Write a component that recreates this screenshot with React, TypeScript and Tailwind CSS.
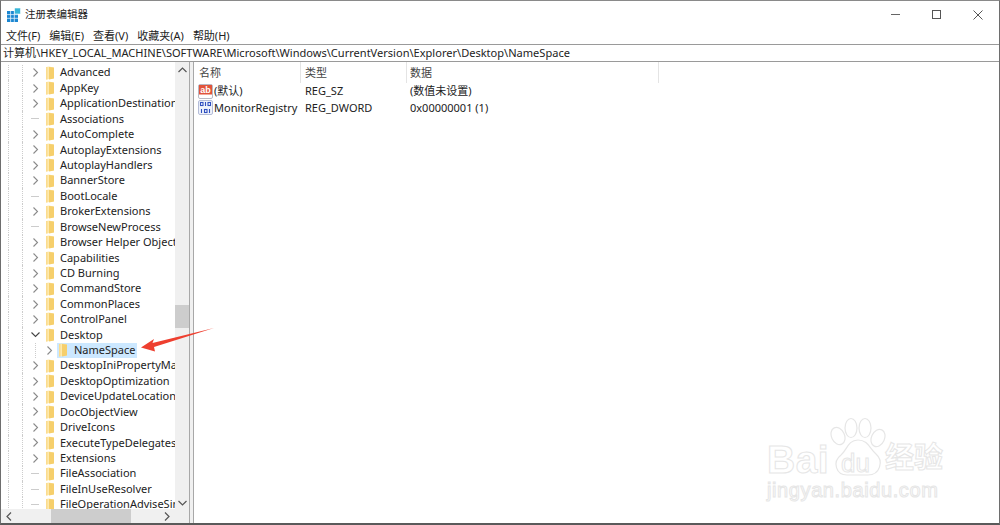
import React from "react";

const font = { fontFamily: '"Noto Sans","Noto Sans CJK SC",sans-serif' };

type Row = { name: string; kind: "c" | "l" | "o" | "s" };
const rows: Row[] = [
  { name: "Advanced", kind: "c" },
  { name: "AppKey", kind: "c" },
  { name: "ApplicationDestinations", kind: "c" },
  { name: "Associations", kind: "l" },
  { name: "AutoComplete", kind: "c" },
  { name: "AutoplayExtensions", kind: "c" },
  { name: "AutoplayHandlers", kind: "c" },
  { name: "BannerStore", kind: "c" },
  { name: "BootLocale", kind: "l" },
  { name: "BrokerExtensions", kind: "c" },
  { name: "BrowseNewProcess", kind: "l" },
  { name: "Browser Helper Objects", kind: "c" },
  { name: "Capabilities", kind: "c" },
  { name: "CD Burning", kind: "c" },
  { name: "CommandStore", kind: "c" },
  { name: "CommonPlaces", kind: "c" },
  { name: "ControlPanel", kind: "c" },
  { name: "Desktop", kind: "o" },
  { name: "NameSpace", kind: "s" },
  { name: "DesktopIniPropertyMap", kind: "c" },
  { name: "DesktopOptimization", kind: "c" },
  { name: "DeviceUpdateLocations", kind: "c" },
  { name: "DocObjectView", kind: "c" },
  { name: "DriveIcons", kind: "c" },
  { name: "ExecuteTypeDelegates", kind: "c" },
  { name: "Extensions", kind: "c" },
  { name: "FileAssociation", kind: "l" },
  { name: "FileInUseResolver", kind: "l" },
  { name: "FileOperationAdviseSinks", kind: "l" },
];

function Folder() {
  return (
    <svg width="10" height="14" viewBox="0 0 10 14" className="shrink-0">
      <path d="M1 1 L4 0.5 L8.5 1.5 V12.5 L1 13.5 Z" fill="#fde9ad" />
      <path d="M4 1 L9 1.5 V12.5 L4 13.5 Z" fill="#f6cf6c" />
      <path d="M1 1 L2.5 1 V13.5 L1 13.5 Z" fill="#fbdc8e" />
    </svg>
  );
}

function Chevron({ open }: { open?: boolean }) {
  return (
    <svg width="9" height="9" viewBox="0 0 9 9" fill="none" stroke="#8a8a8a" strokeWidth="1.1" className="shrink-0">
      {open ? <path d="M0.5 2.5 L4.5 6.5 L8.5 2.5" stroke="#444" /> : <path d="M2.5 0.5 L6.5 4.5 L2.5 8.5" />}
    </svg>
  );
}

function TreeRow({ row }: { row: Row }) {
  const sel = row.kind === "s";
  return (
    <div className="flex h-[15.43px] shrink-0 items-center whitespace-nowrap text-[11px] text-[#222]">
      <div className="h-full w-[8px] shrink-0 border-r border-dotted border-[#ccc]" />
      <div className="h-full w-[14px] shrink-0 border-r border-dotted border-[#ccc]" />
      {sel ? (
        <>
          <div className="h-full w-[13px] shrink-0 border-r border-dotted border-[#ccc]" />
          <div className="ml-[9px] flex h-[15px] w-[12px] shrink-0 items-center"><Chevron /></div>
          <div className="flex h-[15px] items-center gap-[6px] bg-[#cce8ff] pl-[1px] pr-[2px]">
            <Folder />
            <span>{row.name}</span>
          </div>
        </>
      ) : (
        <>
          <div className="ml-[8px] flex w-[14px] shrink-0 items-center">
            {row.kind === "l" ? <div className="h-px w-[8px] bg-[#ccc]" /> : <Chevron open={row.kind === "o"} />}
          </div>
          <Folder />
          <span className="ml-[5px]">{row.name}</span>
        </>
      )}
    </div>
  );
}

function AbIcon() {
  return (
    <svg width="15" height="15" viewBox="0 0 15 15" className="shrink-0">
      <rect x="0.5" y="0.5" width="14" height="14" rx="1.5" fill="#fff" stroke="#b9b9c4" />
      <rect x="1" y="1" width="13" height="9.5" fill="#e2543a" />
      <text x="7.5" y="9" textAnchor="middle" fontSize="9" fontWeight="700" fill="#fff" fontFamily="Liberation Sans">ab</text>
    </svg>
  );
}

function BinIcon() {
  return (
    <svg width="15" height="15" viewBox="0 0 15 15" className="shrink-0">
      <rect x="0.5" y="0.5" width="14" height="14" rx="1.5" fill="#eef2fb" stroke="#b4bcd8" />
      <g fill="none" stroke="#2f4fc0" strokeWidth="1.1">
        <rect x="2.5" y="2.5" width="2.5" height="3" />
        <path d="M7.5 2 V6" />
        <rect x="10" y="2.5" width="2.5" height="3" />
        <path d="M3.5 9 V13" />
        <rect x="6.5" y="9.5" width="2.5" height="3" />
        <path d="M11.5 9 V13" />
      </g>
    </svg>
  );
}

function Arrow() {
  return (
    <svg width="90" height="40" viewBox="0 0 90 40" className="absolute left-[135px] top-[322px]">
      <path d="M5 24.5 L18 16 L16.5 20 L78 5 L18 24 L19 28.5 Z" fill="#ee3f2f" />
    </svg>
  );
}

function Watermark() {
  const outline = "text-transparent [-webkit-text-stroke:1px_#e6e6e6]";
  return (
    <div className="absolute left-[765px] top-[416px] h-[90px] w-[200px]" style={{ fontFamily: '"Liberation Sans","Noto Sans CJK SC",sans-serif' }}>
      <span className={`absolute left-[1px] top-[21px] text-[39px] font-bold leading-[44px] tracking-[0.5px] ${outline}`}>Bai</span>
      <svg width="56" height="62" viewBox="0 0 56 62" fill="#fff" stroke="#e6e6e6" strokeWidth="1.2" className="absolute left-[64px] top-0">
        <ellipse cx="8" cy="19" rx="6.5" ry="9" transform="rotate(-25 8 19)" />
        <ellipse cx="21" cy="11" rx="6" ry="9.5" />
        <ellipse cx="35" cy="11" rx="6" ry="9.5" />
        <ellipse cx="48" cy="21" rx="6.5" ry="9" transform="rotate(25 48 21)" />
        <path d="M28 23 C38 23 40 32 46 37 C54 44 50 58 38 58 C32 58 24 58 17 58 C6 58 2 45 11 38 C17 33 18 23 28 23 Z" />
      </svg>
      <span className={`absolute left-[75px] top-[32px] text-[26px] leading-[28px] ${outline}`}>du</span>
      <span className={`absolute left-[119px] top-[24px] text-[29px] font-bold leading-[34px] ${outline}`}>经验</span>
      <span className={`absolute left-[1px] top-[61px] text-[20px] leading-[24px] tracking-[0.6px] ${outline}`}>jingyan.baidu.com</span>
    </div>
  );
}

export default function App() {
  return (
    <div className="relative flex h-[525px] w-[1000px] flex-col overflow-hidden border-x border-t border-b-2 border-x-[#6e6e6e] border-t-[#8a8a8a] border-b-[#5a5a5a] bg-white text-[#222]" style={font}>
      <div className="flex h-[27px] shrink-0 items-center">
        <svg width="14" height="14" viewBox="0 0 14 14" className="ml-[6px] shrink-0">
          <rect x="0" y="3" width="11" height="11" fill="#1b86d1" />
          <path d="M3.6 3V14M7.3 3V14M0 6.6H11M0 10.3H11" stroke="#e6f3fb" strokeWidth="0.8" />
          <rect x="7.5" y="0" width="6" height="6" fill="#37b6d8" stroke="#fff" strokeWidth="0.6" />
        </svg>
        <span className="ml-[4px] text-[10.5px]">注册表编辑器</span>
        <div className="ml-auto flex items-center">
          <div className="mr-[32px] h-px w-[9px] bg-[#666]" />
          <div className="mr-[32px] h-[9px] w-[9px] border border-[#555]" />
          <svg width="10" height="10" viewBox="0 0 10 10" className="mr-[16px]" stroke="#555" fill="none"><path d="M0.5 0.5 L9.5 9.5 M9.5 0.5 L0.5 9.5" /></svg>
        </div>
      </div>
      <div className="flex h-[16px] shrink-0 items-center gap-[9px] pl-[5px] text-[11px]">
        <span>文件(F)</span>
        <span>编辑(E)</span>
        <span>查看(V)</span>
        <span>收藏夹(A)</span>
        <span>帮助(H)</span>
      </div>
      <div className="flex h-[18px] shrink-0 items-center border-y border-[#9a9a9a] pl-[2px] text-[11.05px] leading-none">
        计算机\HKEY_LOCAL_MACHINE\SOFTWARE\Microsoft\Windows\CurrentVersion\Explorer\Desktop\NameSpace
      </div>
      <div className="flex min-h-0 flex-1">
        <div className="flex w-[188px] shrink-0 flex-col">
          <div className="flex min-h-0 flex-1">
            <div className="flex min-w-0 flex-1 flex-col overflow-hidden pt-[3px]">
              {rows.map((r) => <TreeRow key={r.name} row={r} />)}
            </div>
            <div className="flex w-[14px] shrink-0 flex-col items-center bg-[#f0f0f0]">
              <svg width="9" height="6" viewBox="0 0 9 6" fill="none" stroke="#555" strokeWidth="1.2" className="mt-[5px]"><path d="M0.5 5 L4.5 1 L8.5 5" /></svg>
              <div className="mt-[232px] h-[23px] w-full bg-[#cdcdcd]" />
              <svg width="9" height="6" viewBox="0 0 9 6" fill="none" stroke="#555" strokeWidth="1.2" className="mt-auto mb-[3px]"><path d="M0.5 1 L4.5 5 L8.5 1" /></svg>
            </div>
          </div>
          <div className="flex h-[14px] shrink-0 items-center bg-[#f0f0f0]">
            <svg width="6" height="9" viewBox="0 0 6 9" fill="none" stroke="#555" strokeWidth="1.2" className="ml-[5px]"><path d="M5 0.5 L1 4.5 L5 8.5" /></svg>
            <div className="ml-[39px] h-full w-[80px] bg-[#cdcdcd]" />
            <svg width="6" height="9" viewBox="0 0 6 9" fill="none" stroke="#555" strokeWidth="1.2" className="ml-[33px]"><path d="M1 0.5 L5 4.5 L1 8.5" /></svg>
          </div>
        </div>
        <div className="w-[5px] shrink-0 border-x border-[#a8a8a8] bg-[#f0f0f0]" />
        <div className="flex min-w-0 flex-1 flex-col text-[11px]">
          <div className="flex h-[21px] shrink-0 items-stretch text-[#444]">
            <div className="flex w-[107px] items-center border-r border-[#e4e4e4] pl-[5px] pt-[2px]">名称</div>
            <div className="flex w-[106px] items-center border-r border-[#e4e4e4] pl-[4px] pt-[2px]">类型</div>
            <div className="flex w-[252px] items-center border-r border-[#e4e4e4] pl-[3px] pt-[2px]">数据</div>
          </div>
          <div className="flex h-[16.5px] shrink-0 items-center">
            <div className="flex w-[107px] items-center gap-[1px] pl-[4px]"><AbIcon /><span>(默认)</span></div>
            <div className="w-[106px] pl-[4px]">REG_SZ</div>
            <div className="pl-[3px]">(数值未设置)</div>
          </div>
          <div className="flex h-[16.5px] shrink-0 items-center">
            <div className="flex w-[107px] items-center gap-[1px] whitespace-nowrap pl-[4px]"><BinIcon /><span>MonitorRegistry</span></div>
            <div className="w-[106px] pl-[4px]">REG_DWORD</div>
            <div className="pl-[3px]">0x00000001 (1)</div>
          </div>
        </div>
      </div>
      <Arrow />
      <Watermark />
    </div>
  );
}
